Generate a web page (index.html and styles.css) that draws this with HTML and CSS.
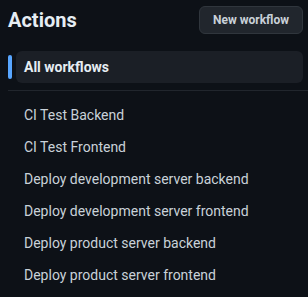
FILE: index.html
```html
<!DOCTYPE html>
<html>
<head>
<meta charset="utf-8">
<link rel="stylesheet" href="styles.css">
</head>
<body>
<div class="sidebar">
  <div class="header">
    <h2 class="title">Actions</h2>
    <button class="btn">New workflow</button>
  </div>
  <nav class="nav">
    <div class="item active"><span class="indicator"></span><span class="label">All workflows</span></div>
  </nav>
  <div class="divider"></div>
  <ul class="list">
    <li class="row">CI Test Backend</li>
    <li class="row">CI Test Frontend</li>
    <li class="row">Deploy development server backend</li>
    <li class="row">Deploy development server frontend</li>
    <li class="row">Deploy product server backend</li>
    <li class="row">Deploy product server frontend</li>
  </ul>
</div>
</body>
</html>
```
FILE: styles.css
```css
html, body {
  margin: 0;
  padding: 0;
  background: #0d1117;
}
body {
  font-family: "Roboto", "Segoe UI", sans-serif;
  color: #c9d1d9;
  overflow: hidden;
}
.sidebar {
  padding: 6px 5px 0 8px;
}
.header {
  display: flex;
  justify-content: space-between;
  align-items: center;
  height: 28px;
}
.title {
  margin: 0;
  font-size: 20px;
  font-weight: 700;
  color: #e6edf3;
  line-height: 28px;
}
.btn {
  height: 28px;
  width: 104px;
  padding: 0;
  border: 1px solid #30363d;
  border-radius: 6px;
  background: #21262d;
  color: #c9d1d9;
  font-family: inherit;
  font-size: 12px;
  font-weight: 700;
}
.nav {
  margin-top: 17px;
}
.item {
  display: flex;
  align-items: center;
  height: 32px;
}
.indicator {
  width: 4px;
  height: 24px;
  border-radius: 6px;
  background: #58a6ff;
  margin-right: 4px;
}
.item .label {
  flex: 1;
  height: 32px;
  line-height: 32px;
  padding-left: 8px;
  background: #1b1f26;
  border-radius: 6px;
  font-size: 14px;
  font-weight: 700;
  color: #e6edf3;
}
.divider {
  margin-top: 7px;
  margin-right: -5px;
  height: 1px;
  background: #21262d;
}
.list {
  list-style: none;
  margin: 8px 0 0;
  padding: 0;
}
.row {
  height: 32px;
  line-height: 32px;
  padding-left: 16px;
  font-size: 14px;
  color: #c9d1d9;
}
```
